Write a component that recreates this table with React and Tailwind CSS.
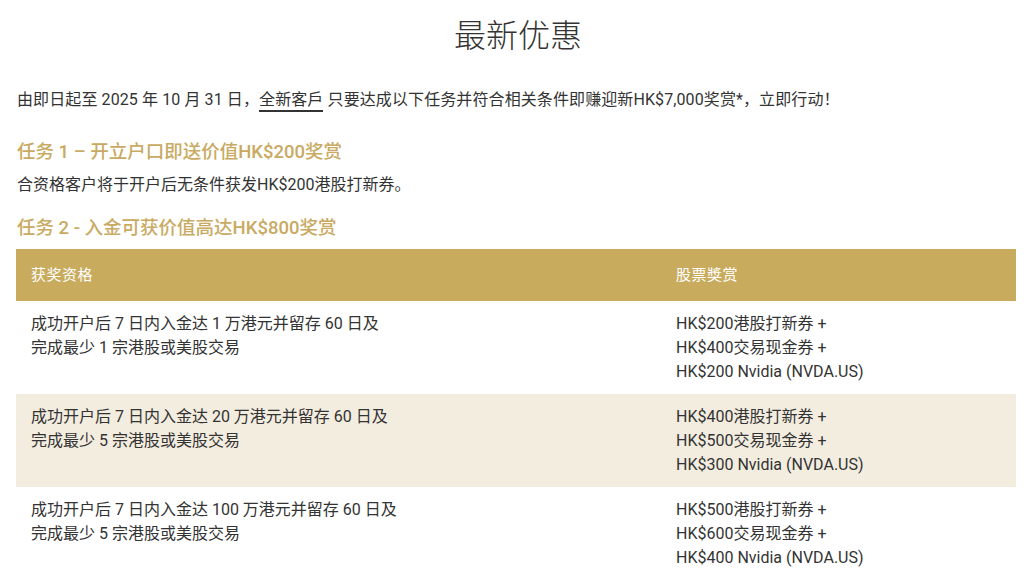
import React from 'react';

const rows = [
  {
    cond: ['成功开户后 7 日内入金达 1 万港元并留存 60 日及', '完成最少 1 宗港股或美股交易'],
    reward: ['HK$200港股打新券 +', 'HK$400交易现金券 +', 'HK$200 Nvidia (NVDA.US)'],
  },
  {
    cond: ['成功开户后 7 日内入金达 20 万港元并留存 60 日及', '完成最少 5 宗港股或美股交易'],
    reward: ['HK$400港股打新券 +', 'HK$500交易现金券 +', 'HK$300 Nvidia (NVDA.US)'],
  },
  {
    cond: ['成功开户后 7 日内入金达 100 万港元并留存 60 日及', '完成最少 5 宗港股或美股交易'],
    reward: ['HK$500港股打新券 +', 'HK$600交易现金券 +', 'HK$400 Nvidia (NVDA.US)'],
  },
];

export default function App() {
  return (
    <div className="min-h-screen bg-white px-4 text-[#333] font-['Roboto','Noto_Sans_CJK_SC',sans-serif]">
      <h1 className="pt-[14px] text-center text-[32px] font-light leading-[44px] text-[#333]">最新优惠</h1>

      <p className="mt-[30px] pl-px text-[16px] leading-[24px] tracking-[0.1px]">
        由即日起至 2025 年 10 月 31 日，
        <span className="border-b-2 border-[#333] pb-[1px]">全新客戶</span> 只要达成以下任务并符合相关条件即赚迎新HK$7,000奖赏*，立即行动！
      </p>

      <h2 className="mt-[28px] pl-px text-[18.5px] font-medium leading-[24px] text-[#c9aa62]">任务 1 – 开立户口即送价值HK$200奖赏</h2>
      <p className="mt-[9px] pl-px text-[16px] leading-[24px]">合资格客户将于开户后无条件获发HK$200港股打新券。</p>

      <h2 className="mt-[19px] pl-px text-[18.5px] font-medium leading-[24px] text-[#c9aa62]">任务 2 - 入金可获价值高达HK$800奖赏</h2>

      <div className="mt-[9px] w-[1000px]">
        <div className="flex h-[52px] items-center bg-[#c9ab5e] text-[15px] tracking-[0.5px] text-white">
          <div className="w-[660px] pl-[15px]">获奖资格</div>
          <div className="flex-1">股票獎赏</div>
        </div>
        {rows.map((r, i) => (
          <div key={i} className={`flex pt-[11px] pb-[10px] text-[16px] leading-[24px] ${i === 1 ? 'bg-[#f3ede0]' : 'bg-white'}`}>
            <div className="w-[660px] pl-[15px]">
              {r.cond.map((l) => (
                <div key={l}>{l}</div>
              ))}
            </div>
            <div className="flex-1">
              {r.reward.map((l) => (
                <div key={l}>{l}</div>
              ))}
            </div>
          </div>
        ))}
      </div>
    </div>
  );
}
